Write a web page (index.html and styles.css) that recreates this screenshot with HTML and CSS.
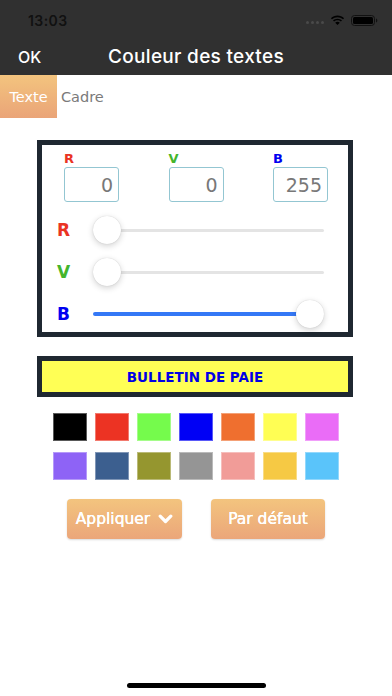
FILE: index.html
```html
<!DOCTYPE html>
<html lang="fr">
<head>
<meta charset="utf-8">
<title>Couleur des textes</title>
<link rel="stylesheet" href="styles.css">
</head>
<body>
<div class="page">
  <header class="top">
    <div class="status">
      <span class="time">13:03</span>
      <div class="sys">
        <div class="dots"><i></i><i></i><i></i><i></i></div>
        <svg class="wifi" width="15" height="11" viewBox="0 0 15 11"><path fill="#000" d="M7.5 2.2c2.1 0 4 .8 5.5 2.1l1.1-1.1C12.3 1.5 10 .6 7.5.6S2.7 1.5.9 3.2L2 4.3C3.5 3 5.4 2.2 7.5 2.2zM7.5 5.3c1.3 0 2.5.5 3.4 1.3l1.1-1.1C10.8 4.4 9.2 3.7 7.5 3.7S4.2 4.4 3 5.5l1.1 1.1c.9-.8 2.1-1.3 3.4-1.3zM5.2 7.7Q7.5 5.8 9.8 7.7L7.5 10z"/></svg>
        <svg class="battery" width="27" height="11" viewBox="0 0 27 11"><rect x="0.5" y="0.5" width="23" height="10" rx="3" fill="none" stroke="#111" stroke-width="1"/><rect x="2" y="2" width="20" height="7" rx="1.5" fill="#000"/><path d="M25 3.5v4c.8-.3 1.3-1 1.3-2s-.5-1.7-1.3-2z" fill="#111"/></svg>
      </div>
    </div>
    <nav class="nav">
      <span class="ok">OK</span>
      <span class="title">Couleur des textes</span>
      <span></span>
    </nav>
  </header>

  <div class="tabs">
    <div class="tab on">Texte</div>
    <div class="tab off">Cadre</div>
  </div>

  <section class="picker">
    <div class="fields">
      <div class="field"><span class="flabel red">R</span><div class="input">0</div></div>
      <div class="field"><span class="flabel green">V</span><div class="input">0</div></div>
      <div class="field"><span class="flabel blue">B</span><div class="input">255</div></div>
    </div>
    <div class="sliders">
      <div class="srow">
        <span class="slabel red">R</span>
        <div class="slider"><span class="thumb"></span><span class="rest"></span></div>
      </div>
      <div class="srow">
        <span class="slabel green">V</span>
        <div class="slider"><span class="thumb"></span><span class="rest"></span></div>
      </div>
      <div class="srow">
        <span class="slabel blue">B</span>
        <div class="slider"><span class="fill"></span><span class="thumb"></span></div>
      </div>
    </div>
  </section>

  <div class="preview">BULLETIN DE PAIE</div>

  <div class="swatches">
    <span class="sw c1"></span><span class="sw c2"></span><span class="sw c3"></span><span class="sw c4"></span><span class="sw c5"></span><span class="sw c6"></span><span class="sw c7"></span>
    <span class="sw c8"></span><span class="sw c9"></span><span class="sw c10"></span><span class="sw c11"></span><span class="sw c12"></span><span class="sw c13"></span><span class="sw c14"></span>
  </div>

  <div class="actions">
    <div class="btn apply">Appliquer <svg width="15" height="10" viewBox="0 0 15 10"><path d="M2.2 2.2l5.3 5.3 5.3-5.3" fill="none" stroke="#fff" stroke-width="3.2" stroke-linecap="round" stroke-linejoin="round"/></svg></div>
    <div class="btn default">Par défaut</div>
  </div>

  <div class="home"></div>
</div>
</body>
</html>
```
FILE: styles.css
```css
* { box-sizing: border-box; }
html, body { margin: 0; padding: 0; }
body {
  width: 392px;
  height: 696px;
  overflow: hidden;
  background: #fff;
  font-family: "DejaVu Sans", sans-serif;
}
.page {
  display: flex;
  flex-direction: column;
  height: 696px;
}
.top { background: #303030; }
.status {
  height: 38px;
  display: flex;
  align-items: center;
  justify-content: space-between;
  padding: 2px 14px 0 28px;
}
.time {
  font-family: Inter, sans-serif;
  font-weight: 600;
  font-size: 14px;
  color: #111;
  letter-spacing: 0.4px;
}
.sys { display: flex; align-items: center; gap: 6px; }
.dots { display: flex; gap: 2px; margin-top: 4px; }
.dots i { width: 3px; height: 3px; border-radius: 50%; background: #4a4a4a; }
.nav {
  height: 37px;
  display: grid;
  grid-template-columns: 1fr auto 1fr;
  align-items: center;
}
.ok {
  padding-left: 18px;
  color: #fff;
  font-family: Inter, sans-serif;
  font-weight: 500;
  font-size: 16px;
}
.title {
  color: #fff;
  font-family: Inter, sans-serif;
  font-weight: 500;
  font-size: 19px;
  letter-spacing: 0.3px;
}

.tabs { display: flex; height: 43px; }
.tab { display: flex; align-items: center; font-size: 14.5px; }
.tab.on {
  width: 57px;
  justify-content: center;
  color: #fff;
  background: linear-gradient(#f3c47e, #eaa478);
}
.tab.off { padding-left: 4px; color: #7a7a7a; }

.picker {
  margin: 22px 0 0 37px;
  width: 316px;
  height: 197px;
  border: 5px solid #1f2831;
  padding-top: 7px;
}
.fields {
  display: flex;
  justify-content: space-between;
  padding: 0 20px 0 22px;
}
.field { width: 55px; display: flex; flex-direction: column; }
.flabel {
  font-weight: bold;
  font-size: 13px;
  line-height: 14px;
  height: 14px;
  margin-bottom: 1px;
}
.input {
  height: 35px;
  border: 1.5px solid #93c6d2;
  border-radius: 3px;
  display: flex;
  align-items: center;
  justify-content: flex-end;
  padding-right: 5px;
  font-size: 19px;
  color: #787878;
}
.red { color: #ea3323; }
.green { color: #44b52c; }
.blue { color: #0000f0; }

.sliders { margin-top: 10px; display: flex; flex-direction: column; gap: 6px; }
.srow { height: 36px; display: flex; align-items: center; padding-left: 15px; }
.slabel { width: 36px; font-weight: bold; font-size: 17px; }
.slider { width: 231px; display: flex; align-items: center; }
.fill { flex: 1; height: 4px; background: #3478f6; border-radius: 2px; margin-right: -3px; }
.rest { flex: 1; height: 3px; background: #e4e4e4; border-radius: 2px; margin-left: -3px; }
.thumb {
  width: 28px;
  height: 28px;
  border-radius: 50%;
  background: #fff;
  box-shadow: 0 2px 6px rgba(0, 0, 0, 0.18), 0 0 1px rgba(0, 0, 0, 0.2);
  position: relative;
  z-index: 1;
}

.preview {
  margin: 19px 0 0 37px;
  width: 316px;
  height: 41px;
  border: 5px solid #1f2831;
  background: #ffff55;
  display: flex;
  align-items: center;
  justify-content: center;
  font-weight: bold;
  font-size: 13.5px;
  color: #0000e6;
}

.swatches {
  margin-top: 16px;
  display: grid;
  grid-template-columns: repeat(7, 34px);
  column-gap: 8px;
  row-gap: 11px;
  justify-content: center;
}
.sw { height: 28px; box-shadow: inset 0 0 0 1px rgba(255, 255, 255, 0.35); }
.c1 { background: #000000; }
.c2 { background: #ec3323; }
.c3 { background: #75fb4c; }
.c4 { background: #0000f5; }
.c5 { background: #ef6f2f; }
.c6 { background: #fffe54; }
.c7 { background: #ea6cf7; }
.c8 { background: #8e63f6; }
.c9 { background: #3c5f8f; }
.c10 { background: #95962f; }
.c11 { background: #959595; }
.c12 { background: #f19c98; }
.c13 { background: #f6c944; }
.c14 { background: #5ac4fa; }

.actions { margin-top: 19px; display: flex; justify-content: center; gap: 29px; }
.btn {
  height: 40px;
  border-radius: 4px;
  background: linear-gradient(#f3c47e, #eba67a);
  color: #fff;
  font-size: 15.5px;
  text-shadow: 0 0 0.4px #fff, 0 0 0.4px #fff;
  display: flex;
  align-items: center;
  justify-content: center;
  box-shadow: 0 1px 2px rgba(0, 0, 0, 0.15);
}
.apply { width: 115px; gap: 8px; }
.default { width: 114px; }

.home {
  margin-top: auto;
  margin-bottom: 8px;
  align-self: center;
  width: 139px;
  height: 5px;
  border-radius: 3px;
  background: #000;
}
```
